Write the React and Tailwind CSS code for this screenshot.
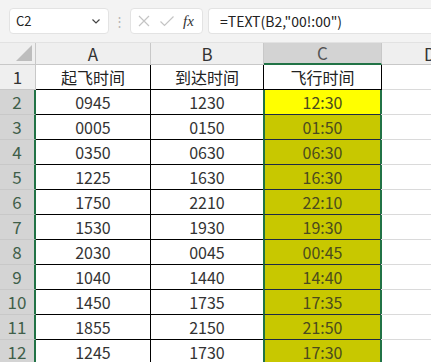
import React from 'react'

const rows = [
  ['0945', '1230', '12:30'],
  ['0005', '0150', '01:50'],
  ['0350', '0630', '06:30'],
  ['1225', '1630', '16:30'],
  ['1750', '2210', '22:10'],
  ['1530', '1930', '19:30'],
  ['2030', '0045', '00:45'],
  ['1040', '1440', '14:40'],
  ['1450', '1735', '17:35'],
  ['1855', '2150', '21:50'],
  ['1245', '1730', '17:30'],
]

const font = { fontFamily: '"Noto Sans CJK SC", "Noto Sans", sans-serif' }

function FormulaBar() {
  return (
    <div className="h-[43px] bg-[#f3f3f3] flex items-start pt-[8px] border-b border-[#e2e2e2]">
      <div className="ml-[9px] w-[100px] h-[26px] bg-white rounded-[4px] border border-[#e3e3e3] flex items-center justify-between px-[6px]">
        <span className="text-[13px] text-[#222]">C2</span>
        <svg width="10" height="10" viewBox="0 0 10 10" className="mr-[1px]">
          <path d="M1.5 3.5 L5 7 L8.5 3.5" fill="none" stroke="#444" strokeWidth="1.2" />
        </svg>
      </div>
      <div className="w-[21px] flex justify-center items-center h-[26px] text-[#b5b5b5] text-[13px]">⋮</div>
      <div className="w-[73px] h-[26px] bg-white rounded-[4px] border border-[#e3e3e3] flex items-center px-[6px] gap-[8px]">
        <svg width="14" height="14" viewBox="0 0 14 14">
          <path d="M2 2 L12 12 M12 2 L2 12" stroke="#c4c4c4" strokeWidth="1.2" />
        </svg>
        <svg width="16" height="14" viewBox="0 0 16 14">
          <path d="M1.5 7.5 L5.5 11.5 L14.5 2.5" fill="none" stroke="#c4c4c4" strokeWidth="1.2" />
        </svg>
        <span className="text-[15px] italic text-[#333]" style={{ fontFamily: '"Liberation Serif", serif' }}>fx</span>
      </div>
      <div className="ml-[5px] flex-1 h-[26px] bg-white rounded-l-[4px] border border-r-0 border-[#e3e3e3] flex items-center pl-[11px]">
        <span className="text-[14px] text-[#222]">=TEXT(B2,"00!:00")</span>
      </div>
    </div>
  )
}

export default function App() {
  return (
    <div className="w-[431px] h-[362px] overflow-hidden bg-white" style={font}>
      <FormulaBar />
      <div className="grid grid-cols-[36px_115px_113px_118px_49px] w-[431px]">
        {/* header row */}
        <div className="h-[22px] bg-[#efefef] border-r border-b border-[#c8c8c8] relative">
          <svg width="16" height="16" viewBox="0 0 16 16" className="absolute right-[3px] bottom-[3px]">
            <path d="M16 0 L16 16 L0 16 Z" fill="#bdbdbd" />
          </svg>
        </div>
        <div className="h-[22px] bg-[#efefef] border-r border-b border-[#c8c8c8] flex items-center justify-center text-[17px] text-[#333]">A</div>
        <div className="h-[22px] bg-[#efefef] border-r border-b border-[#c8c8c8] flex items-center justify-center text-[17px] text-[#333]">B</div>
        <div className="h-[22px] bg-[#d3d3d3] border-r border-[#c8c8c8] border-b-2 border-b-[#217346] flex items-center justify-center text-[17px] text-[#555]">C</div>
        <div className="h-[22px] bg-[#efefef] border-b border-[#c8c8c8] flex items-center pl-[42px] overflow-hidden text-[17px] text-[#333]">D</div>

        {/* row 1 */}
        <div className="h-[25px] bg-[#efefef] border-r border-b border-[#c8c8c8] flex items-center justify-center text-[17px] text-[#333]">1</div>
        <div className="h-[25px] border-r border-b border-black flex items-center justify-center text-[16px] text-[#222]">起飞时间</div>
        <div className="h-[25px] border-r border-b border-black flex items-center justify-center text-[16px] text-[#222]">到达时间</div>
        <div className="h-[25px] border-r border-b border-black flex items-center justify-center text-[16px] text-[#222]">飞行时间</div>
        <div className="h-[25px] border-b border-[#dadada]" />

        {rows.map(([a, b, c], i) => (
          <React.Fragment key={i}>
            <div className="h-[25px] bg-[#d4d4d4] border-r-2 border-[#217346] border-b border-b-[#c8c8c8] flex items-center justify-center text-[17px] text-[#3f5f4a]">
              {i + 2}
            </div>
            <div className="h-[25px] border-r border-b border-black flex items-center justify-center text-[16px] text-[#333]">{a}</div>
            <div className="h-[25px] border-r border-b border-black flex items-center justify-center text-[16px] text-[#333]">{b}</div>
            <div
              className={`h-[25px] border-l-2 border-r-2 border-l-[#217346] border-r-[#217346] border-b border-b-[#1f2a44] -ml-[1px] flex items-center justify-center text-[16px] text-[#4b4b1e] ${
                i === 0 ? 'bg-[#ffff00]' : 'bg-[#c8c800]'
              }`}
            >
              {c}
            </div>
            <div className="h-[25px] border-b border-[#dadada] -ml-[1px]" />
          </React.Fragment>
        ))}
      </div>
    </div>
  )
}
